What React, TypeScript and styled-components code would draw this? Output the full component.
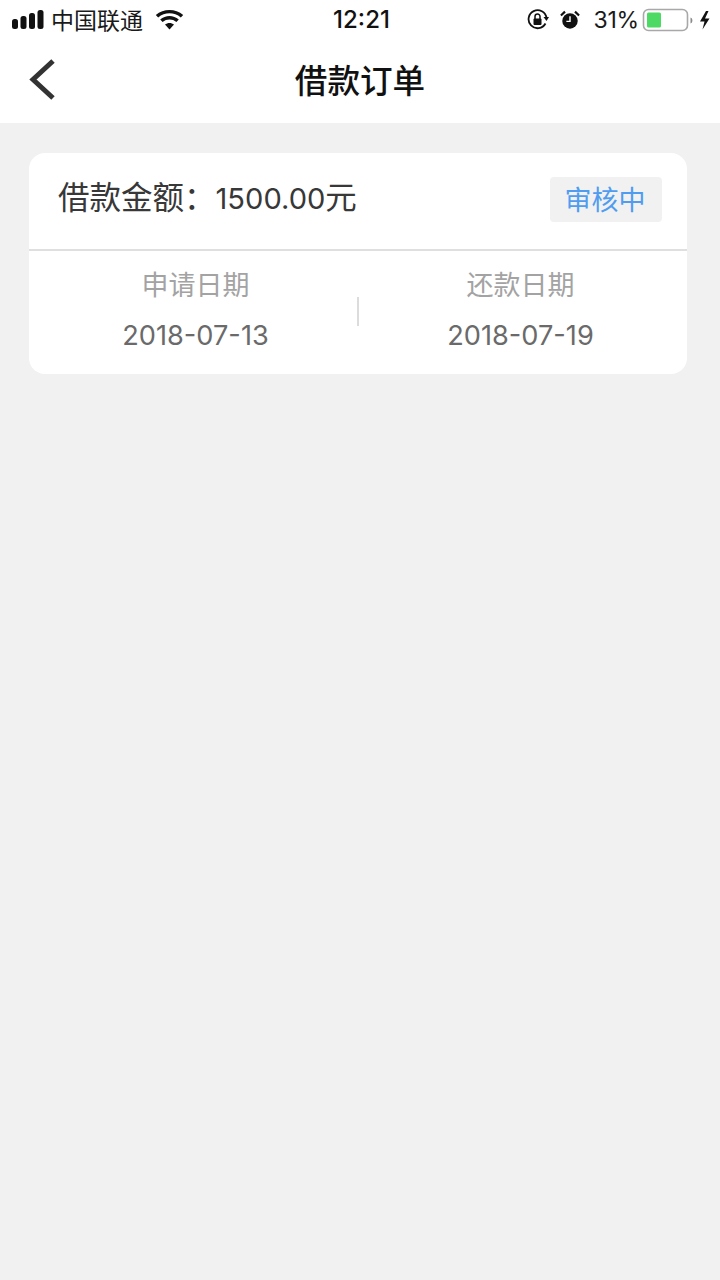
import React from "react";
import styled, { createGlobalStyle } from "styled-components";

const Global = createGlobalStyle`
  html, body { margin: 0; padding: 0; background: #f1f1f1; }
  body { font-family: Inter, "Noto Sans CJK SC", sans-serif; }
`;
const Page = styled.div`
  width: 720px; height: 1280px; background: #f1f1f1; display: flex; flex-direction: column; overflow: hidden;
`;
const Head = styled.header`
  background: #fff; height: 123px; display: flex; flex-direction: column; flex: none;
`;
const StatusBar = styled.div`
  height: 40px; display: grid; grid-template-columns: 1fr auto 1fr; align-items: center; padding: 0 10px 0 12px; color: #111;
`;
const StatusSide = styled.div<{ $end?: boolean }>`
  display: flex; align-items: center; justify-content: ${p => (p.$end ? "flex-end" : "flex-start")};
`;
const Carrier = styled.span`
  font-family: "Noto Sans CJK SC", sans-serif; font-size: 23px; line-height: 38px; margin-left: 7px; margin-bottom: 2px; color: #1a1a1a;
`;
const WifiIcon = styled.svg`
  width: 29px; height: 20px; margin-left: 12px; display: block;
`;
const Clock = styled.span`
  font-size: 24px; font-weight: 550; color: #111; font-family: Inter, sans-serif; line-height: 40px; margin-left: 1px;
`;
const Percent = styled.span`
  font-size: 23px; font-family: Inter, sans-serif; color: #1a1a1a; margin-left: 13px; letter-spacing: -0.2px;
`;
const BatteryIcon = styled.svg`
  width: 68px; height: 24px; margin-left: 3px; display: block;
`;
const AlarmIcon = styled.svg`
  width: 20px; height: 20px; margin-left: 11px; display: block;
`;
const Nav = styled.nav`
  height: 83px; display: flex; align-items: center; justify-content: center; position: relative;
`;
const Back = styled.svg`
  position: absolute; left: 28px; top: 18px; width: 30px; height: 44px;
`;
const Title = styled.h1`
  margin: 0 0 5px; font-family: "Noto Sans CJK SC", sans-serif; font-size: 32.6px; font-weight: 500; color: #111; line-height: 44px;
`;
const Card = styled.section`
  margin: 30px 33px 0 29px; background: #fff; border-radius: 16px; height: 221px; display: flex; flex-direction: column;
`;
const CardTop = styled.div`
  flex: none; display: flex; align-items: center; justify-content: space-between; padding: 0 25px 4px 29px; border-bottom: 2px solid #dfdfdf; height: 92px;
`;
const Amount = styled.div`
  font-family: "Noto Sans CJK SC", sans-serif; font-size: 31.5px; color: #383838; line-height: 44px; white-space: nowrap; margin-bottom: 4px;
`;
const Money = styled.span`
  font-family: Inter, sans-serif; font-size: 29.1px;
`;
const Badge = styled.div`
  width: 112px; height: 45px; background: #f1f1f1; border-radius: 4px; display: flex; align-items: center; justify-content: center; padding: 0 2px 2px 0; box-sizing: border-box;
  font-family: "Noto Sans CJK SC", sans-serif; font-size: 27px; color: #4f9cf0;
`;
const Dates = styled.div`
  flex: 1; display: flex; align-items: center; padding: 0 5px;
`;
const DateCol = styled.div`
  flex: 1; display: flex; flex-direction: column; align-items: center; gap: 12px; padding-bottom: 6px;
`;
const DateLabel = styled.div`
  font-family: "Noto Sans CJK SC", sans-serif; font-size: 27px; color: #a3a3a3; line-height: 40px;
`;
const DateValue = styled.div`
  font-family: Inter, sans-serif; font-size: 27.2px; color: #6a6a6a; line-height: 40px;
`;
const VLine = styled.div`
  width: 2px; height: 29px; background: #dcdcdc; flex: none; margin-bottom: 2px;
`;

export default function App() {
  return (
    <Page>
      <Global />
      <Head>
        <StatusBar>
          <StatusSide>
            <svg width="32" height="20" viewBox="0 0 32 20">
              <rect x="0" y="9" width="6" height="10" rx="2.5" fill="#111" />
              <rect x="8.5" y="6" width="6" height="13" rx="2.5" fill="#111" />
              <rect x="17" y="3" width="6" height="16" rx="2.5" fill="#111" />
              <rect x="25.5" y="0" width="6" height="19" rx="2.5" fill="#111" />
            </svg>
            <Carrier>中国联通</Carrier>
            <WifiIcon viewBox="0 0 29 20">
              <path d="M14.5 19.5 L10 14.6 C12.6 12.4 16.4 12.4 19 14.6 Z" fill="#111" />
              <path d="M7.6 12 L5.2 9.5 C10.5 4.8 18.5 4.8 23.8 9.5 L21.4 12 C17.4 8.7 11.6 8.7 7.6 12 Z" fill="#111" />
              <path d="M3.2 7.4 L0.8 4.9 C8.6 -1.6 20.4 -1.6 28.2 4.9 L25.8 7.4 C19.2 2 9.8 2 3.2 7.4 Z" fill="#111" />
            </WifiIcon>
          </StatusSide>
          <Clock>12:21</Clock>
          <StatusSide $end>
            <svg width="22" height="22" viewBox="0 0 22 22" fill="none">
              <path d="M18.5 14.5 A9 9 0 1 1 19.5 9" stroke="#111" strokeWidth="1.8" />
              <path d="M16.5 8 L22 8 L19.5 12 Z" fill="#111" />
              <rect x="6.5" y="9.5" width="8" height="6.5" rx="1" fill="#111" />
              <path d="M8 10 V7.5 a2.5 2.5 0 0 1 5 0 V10" stroke="#111" strokeWidth="1.5" />
            </svg>
            <AlarmIcon viewBox="0 0 22 22">
              <circle cx="11" cy="12" r="8.5" fill="#111" />
              <path d="M11 7 V12.5 H7" stroke="#fff" strokeWidth="1.6" fill="none" />
              <path d="M1 6 L5.5 1.8 M21 6 L16.5 1.8" stroke="#111" strokeWidth="2.4" />
            </AlarmIcon>
            <Percent>31%</Percent>
            <BatteryIcon viewBox="0 0 68 24">
              <rect x="1.5" y="1.5" width="44" height="21" rx="5" fill="none" stroke="#a8a8a8" strokeWidth="1.6" />
              <rect x="5" y="4.5" width="14" height="15" rx="1.5" fill="#4cd964" />
              <path d="M48.5 9.5 C51 10 51 15 48.5 15.5 Z" fill="#8a8a8a" />
              <path d="M64 3 L58 13.5 H62.5 L60.5 21.5 L67.5 10.5 H63 L66.5 3 Z" fill="#111" />
            </BatteryIcon>
          </StatusSide>
        </StatusBar>
        <Nav>
          <Back viewBox="0 0 30 44" fill="none">
            <path d="M25 3 L5 21.5 L25 40" stroke="#333" strokeWidth="5" />
          </Back>
          <Title>借款订单</Title>
        </Nav>
      </Head>
      <Card>
        <CardTop>
          <Amount>借款金额：<Money>1500.00</Money>元</Amount>
          <Badge>审核中</Badge>
        </CardTop>
        <Dates>
          <DateCol>
            <DateLabel>申请日期</DateLabel>
            <DateValue>2018-07-13</DateValue>
          </DateCol>
          <VLine />
          <DateCol>
            <DateLabel>还款日期</DateLabel>
            <DateValue>2018-07-19</DateValue>
          </DateCol>
        </Dates>
      </Card>
    </Page>
  );
}
